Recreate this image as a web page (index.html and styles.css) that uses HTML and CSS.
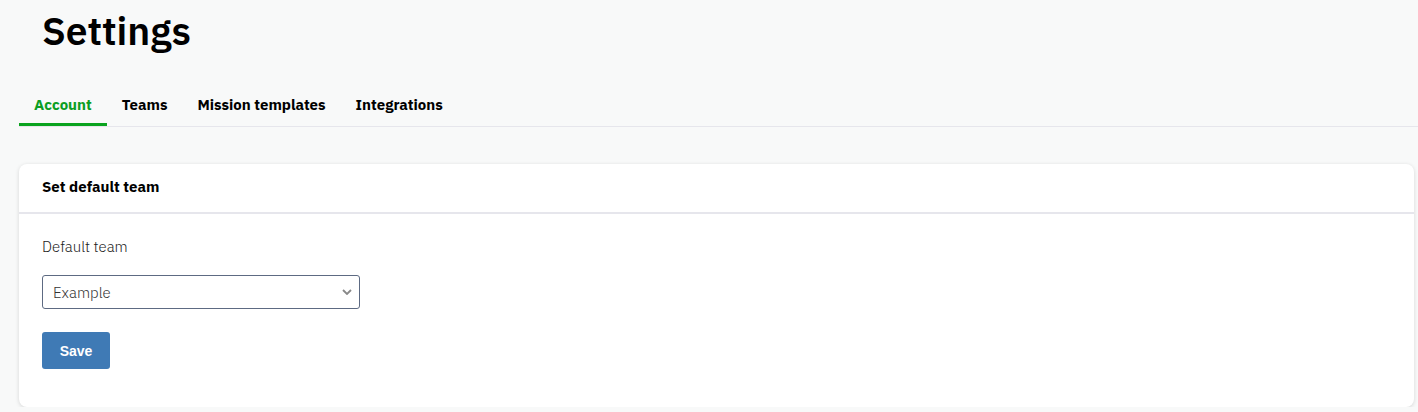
FILE: index.html
```html
<!DOCTYPE html>
<html lang="en">
<head>
  <meta charset="UTF-8" />
  <title>Settings</title>
  <link rel="stylesheet" href="styles.css">
</head>
<body>
  <div class="page">
    <h1 class="title">Settings</h1>

    <nav class="tabs">
      <a class="tab active" href="#">Account</a>
      <a class="tab" href="#">Teams</a>
      <a class="tab" href="#">Mission templates</a>
      <a class="tab" href="#">Integrations</a>
    </nav>

    <section class="card">
      <div class="card-header">Set default team</div>
      <div class="card-body">
        <label class="field-label" for="team">Default team</label>
        <div class="select-wrap">
          <select id="team">
            <option>Example</option>
          </select>
          <svg class="chevron" width="10" height="6" viewBox="0 0 10 6">
            <path d="M1 1l4 4 4-4" fill="none" stroke="#888" stroke-width="1.8"/>
          </svg>
        </div>
        <button class="btn-save">Save</button>
      </div>
    </section>
  </div>
</body>
</html>
```

FILE: styles.css
```css
:root {
  --bg-color: #f8f9f9;
  --accent-color: #0b9e23;
  --border-color: #e6e6ec;
  --text-color: #000000;
  --button-color: #3f7ab5;
}

body {
  margin: 0;
  font-family: 'IBM Plex Sans', Inter, 'Noto Sans', sans-serif;
  background-color: var(--bg-color);
  color: var(--text-color);
}

.page {
  padding: 0 4px 0 19px;
}

.title {
  margin: 0;
  padding: 8px 0 0 23px;
  font-size: 39px;
  font-weight: 600;
  line-height: 46px;
}

.tabs {
  display: flex;
  margin-top: 42px;
  border-bottom: 1px solid var(--border-color);
  margin-right: -4px;
}

.tab {
  padding: 0 15px 9px;
  font-size: 15px;
  font-weight: 700;
  line-height: 18px;
  color: var(--text-color);
  text-decoration: none;
  border-bottom: 3px solid transparent;
}

.tab.active {
  color: var(--accent-color);
  border-bottom-color: #0aa31e;
}

.card {
  margin-top: 37px;
  background: #fff;
  border-radius: 8px;
  box-shadow: 0 1px 4px rgba(0, 0, 0, 0.14);
}

.card-header {
  padding: 14px 23px 16px;
  font-size: 15px;
  font-weight: 700;
  line-height: 18px;
  border-bottom: 2px solid var(--border-color);
}

.card-body {
  padding: 24px 23px 38px;
}

.field-label {
  display: block;
  font-size: 15px;
  font-weight: 300;
  color: #222;
  line-height: 18px;
}

.select-wrap {
  position: relative;
  width: 318px;
  margin-top: 19px;
}

select {
  display: block;
  width: 100%;
  height: 34px;
  padding: 0 10px;
  font-family: inherit;
  font-size: 15px;
  font-weight: 300;
  color: #333;
  background: #fff;
  border: 1px solid #5d6a82;
  border-radius: 3px;
  appearance: none;
}

.chevron {
  position: absolute;
  right: 8px;
  top: 14px;
  pointer-events: none;
}

.btn-save {
  display: block;
  margin-top: 23px;
  width: 68px;
  height: 37px;
  background-color: var(--button-color);
  color: #fff;
  border: none;
  border-radius: 3px;
  font-family: 'Liberation Sans', Arial, sans-serif;
  font-size: 14px;
  font-weight: 700;
  cursor: pointer;
}
```
